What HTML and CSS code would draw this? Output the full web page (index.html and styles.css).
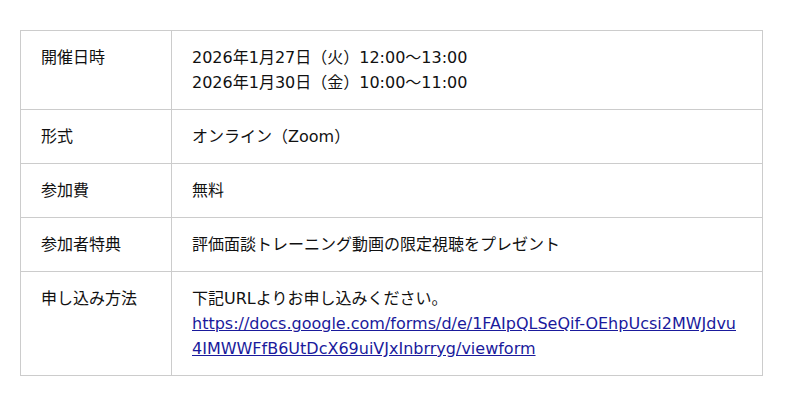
FILE: index.html
```html
<!DOCTYPE html>
<html lang="ja">
<head>
<meta charset="utf-8">
<link rel="stylesheet" href="styles.css">
</head>
<body>
<table class="info">
  <tr>
    <th>開催日時</th>
    <td>2026年1月27日（火）12:00〜13:00<br>2026年1月30日（金）10:00〜11:00</td>
  </tr>
  <tr>
    <th>形式</th>
    <td>オンライン（Zoom）</td>
  </tr>
  <tr>
    <th>参加費</th>
    <td>無料</td>
  </tr>
  <tr>
    <th>参加者特典</th>
    <td>評価面談トレーニング動画の限定視聴をプレゼント</td>
  </tr>
  <tr>
    <th>申し込み方法</th>
    <td>下記URLよりお申し込みください。<br><a class="link" href="#">https://docs.google.com/forms/d/e/1FAIpQLSeQif-OEhpUcsi2MWJdvu4IMWWFfB6UtDcX69uiVJxInbrryg/viewform</a></td>
  </tr>
</table>
</body>
</html>
```
FILE: styles.css
```css
html, body {
  margin: 0;
  background: #fff;
}
body {
  padding: 30px 20px;
  font-family: "DejaVu Sans", "Noto Sans CJK JP", sans-serif;
  font-size: 16px;
  line-height: 25px;
  color: #111;
}
.info {
  width: 743px;
  border-collapse: collapse;
  table-layout: fixed;
}
.info th, .info td {
  border: 1px solid #ccc;
  padding: 14px 20px;
  text-align: left;
  vertical-align: top;
  font-weight: normal;
}
.info th {
  width: 110px;
}
.link {
  color: #1a1a9c;
  text-decoration: underline;
  word-break: break-all;
}
```
